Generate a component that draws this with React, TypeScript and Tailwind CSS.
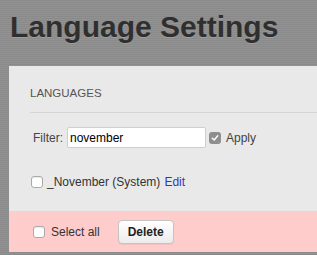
import React from "react";

function Check({ checked }: { checked?: boolean }) {
  if (checked) {
    return (
      <span className="flex h-[12px] w-[12px] shrink-0 items-center justify-center rounded-[3px] bg-[#8e8e8e]">
        <svg width="8" height="8" viewBox="0 0 8 8">
          <path d="M1.3 4.2 L3.2 6 L6.7 1.8" stroke="#fff" strokeWidth="1.4" fill="none" strokeLinecap="round" strokeLinejoin="round" />
        </svg>
      </span>
    );
  }
  return (
    <span className="block h-[12px] w-[12px] shrink-0 rounded-[3px] border border-[#aaaaaa] bg-white shadow-[inset_0_1px_1px_rgba(0,0,0,0.08)]" />
  );
}

export default function App() {
  return (
    <div className="h-[255px] w-[317px] overflow-hidden bg-[#8c8c8c] bg-[repeating-linear-gradient(0deg,#8a8a8a_0px,#8a8a8a_1px,#929292_1px,#929292_2px)] font-['Liberation_Sans',Arial,sans-serif]">
      <h1 className="pl-[10px] pt-[12px] text-[30px] font-bold leading-[30px] text-[#2f2f2f] [text-shadow:0_1px_0_rgba(255,255,255,0.15)]">
        Language Settings
      </h1>
      <div className="ml-[9px] mt-[24px] w-[320px] bg-[#e9e9e9]">
        <div className="pl-[21px] pt-[21px]">
          <div className="border-b border-[#d4d4d4] pb-[13px] text-[11.5px] leading-[12px] text-[#555]">
            LANGUAGES
          </div>
          <div className="mt-[14px] flex items-center pl-[3px] text-[12px] text-[#444]">
            <span className="leading-[14px]">Filter:</span>
            <div className="ml-[4px] flex h-[21px] w-[139px] items-center rounded-[2px] border border-[#cfcfcf] bg-white pl-[2px] text-[12px] text-black">
              november
            </div>
            <span className="ml-[3px]">
              <Check checked />
            </span>
            <span className="ml-[5px] leading-[14px]">Apply</span>
          </div>
          <div className="mt-[27px] flex items-center pl-[1px] text-[12px] leading-[14px] text-[#333]">
            <Check />
            <span className="ml-[4px]">_November (System)</span>
            <span className="ml-[4px] text-[#3333cc]">Edit</span>
          </div>
        </div>
        <div className="mt-[22px] flex h-[41px] items-center bg-[#ffcccc] pl-[24px] text-[12px] text-[#333]">
          <Check />
          <span className="ml-[6px] leading-[14px]">Select all</span>
          <button className="ml-[18px] flex h-[24px] w-[56px] items-center justify-center rounded-[4px] border border-[#c4c4c4] bg-[linear-gradient(#ffffff,#ececec)] text-[12px] font-bold text-[#222] shadow-[0_1px_0_rgba(0,0,0,0.05)]">
            Delete
          </button>
        </div>
      </div>
    </div>
  );
}
